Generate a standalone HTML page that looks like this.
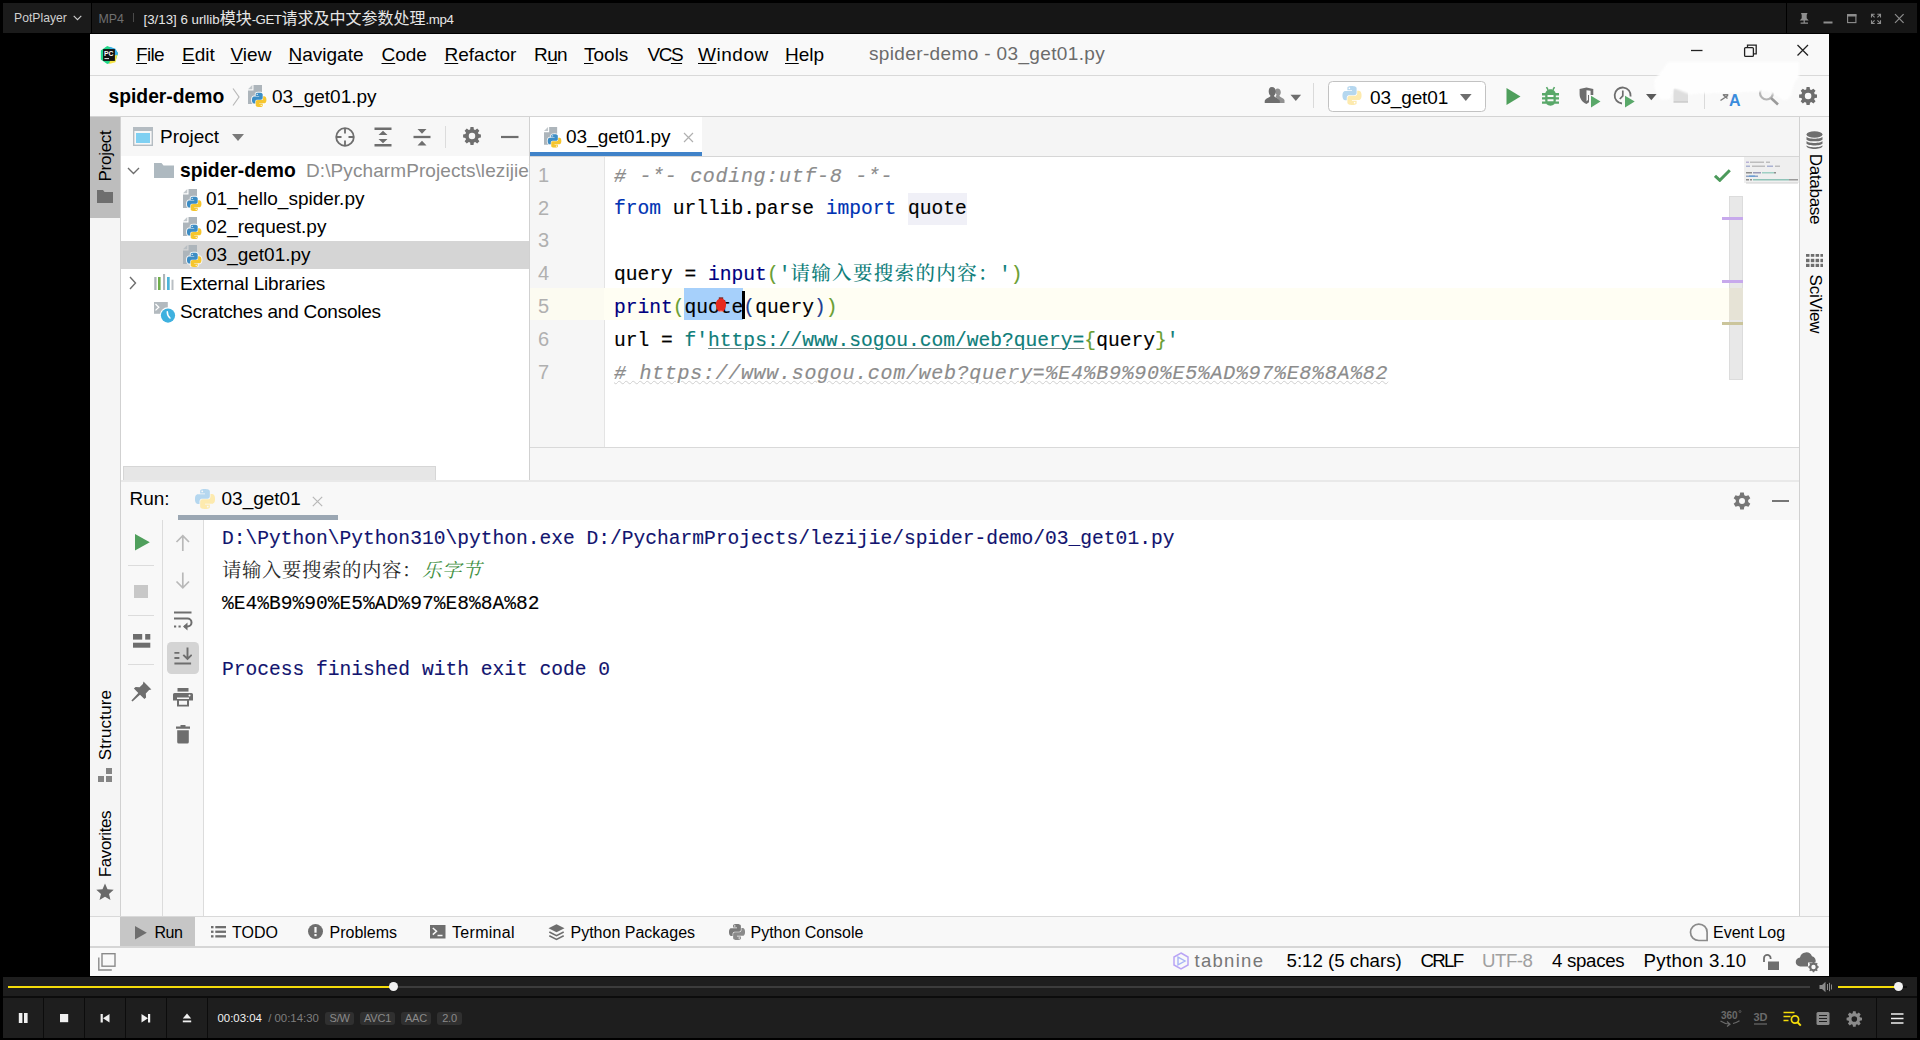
<!DOCTYPE html>
<html lang="zh">
<head>
<meta charset="utf-8">
<title>PotPlayer</title>
<style>
*{box-sizing:border-box;margin:0;padding:0}
html,body{width:1920px;height:1040px;overflow:hidden;background:#000}
body{position:relative;font-family:"Liberation Sans","Noto Sans CJK SC",sans-serif;font-size:19px;color:#000}
.a{position:absolute;white-space:nowrap}
.t{position:absolute;white-space:nowrap;line-height:24px;height:24px}
.mono{font-family:"Liberation Mono","Noto Serif CJK SC",monospace}
u{text-decoration-thickness:1.2px;text-underline-offset:1.5px}
/* potplayer */
#ptitle{left:3px;top:3px;width:1914px;height:30px;background:#161616}
#pctrl{left:3px;top:977px;width:1914px;height:61px;background:#1e1e1e}
/* video */
#vid{left:90px;top:34px;width:1739px;height:942px;background:#f7f7f7;overflow:hidden}
.ln{position:absolute;left:0;width:74px;padding-left:8px;margin-top:2.2px;color:#b0b0b0;font-size:20px;height:33px;line-height:33px}
.cl{-webkit-text-stroke:.15px;position:absolute;left:524px;height:33px;line-height:33px;font-size:19.6px;white-space:pre}
.kw{color:#0033b3}.bi{color:#000080}.st{color:#0f7e7a}.cm{color:#8c8c8c;font-style:italic;font-size:20px;letter-spacing:.69px}
.b1{color:#6a9e32}.b2{color:#1d3f94}.lk{text-decoration:underline;text-decoration-thickness:1px;text-underline-offset:2.2px;text-decoration-color:#6e8683}.wv{text-decoration:underline wavy #cfcfcf 1px;text-underline-offset:1.2px}
.cc{font-family:"Noto Serif CJK SC",serif;font-size:19.4px;letter-spacing:.6px;position:relative;top:.5px;line-height:0;-webkit-text-stroke:0}.ci{font-family:"Noto Serif CJK SC",serif;font-size:19.4px;letter-spacing:.6px;font-style:italic;color:#3f8f3f;position:relative;top:.5px;line-height:0;-webkit-text-stroke:0}
.bb{font-size:16px}.sb{font-size:18.700px}
.bd{position:absolute;top:35.300px;height:13px;line-height:13px;border-radius:3px;background:#303030;color:#8a8a8a;font-size:11px;text-align:center;letter-spacing:-.2px}
.cj{font-family:"Noto Serif CJK SC",serif;font-weight:500;font-size:19.5px;letter-spacing:1.35px;position:relative;top:0;line-height:0;-webkit-text-stroke:0}
.con{-webkit-text-stroke:.12px;position:absolute;left:132px;height:33px;line-height:33px;font-size:19.6px;white-space:pre;color:#000}
</style>
</head>
<body>
<!-- ===== PotPlayer title bar ===== -->
<div class="a" id="ptitle">
<div class="a" style="left:0;top:0;width:88px;height:30px;background:#1b1b1b"></div>
<div class="a" style="left:88px;top:0;width:1px;height:30px;background:#000"></div>
<div class="t" style="left:11px;top:3px;font-size:12.2px;color:#cfcfcf">PotPlayer</div>
<svg class="a" style="left:70px;top:12px" width="9" height="6" viewBox="0 0 9 6"><path d="M0.7 0.8L4.5 4.6L8.3 0.8" fill="none" stroke="#cfcfcf" stroke-width="1.1"/></svg>
<div class="t" style="left:95.5px;top:4px;font-size:12.4px;color:#6f6f6f">MP4</div>
<div class="a" style="left:130px;top:10px;width:1px;height:9px;background:#4a4a4a"></div>
<div class="t" style="left:140.5px;top:3.5px;font-size:13.3px;color:#e6e6e6"><span>[3/13] 6 urllib</span><span style="font-size:16px">模块</span><span style="letter-spacing:-.5px">-GET</span><span style="font-size:16px">请求及中文参数处理</span><span style="letter-spacing:-.4px">.mp4</span></div>
<div class="a" style="left:1783px;top:0;width:1px;height:30px;background:#000"></div>
<svg class="a" style="left:1783px;top:0" width="131" height="30" viewBox="0 0 131 30" fill="none" stroke="#8e8e8e">
<path d="M15 10h6.5l-0.8 2v3.2l2 2.3h-9l2-2.3V12z" fill="#8e8e8e" stroke="none"/><path d="M18.2 17v3M14.6 20.2h7.4" stroke-width="1.2"/>
<path d="M37.5 19.5h9" stroke-width="2"/>
<rect x="61.6" y="11.6" width="8.3" height="8" stroke-width="1.1"/><path d="M61 12.4h9.4" stroke-width="2.2"/>
<path d="M85.5 14.5v-3.2h3.2M94.500 14.5v-3.2h-3.2M85.5 17.300v3.2h3.2M94.5 17.300v3.2h-3.2M85.8 11.600l2.800 2.800M94.200 11.600l-2.800 2.800M85.800 20.200l2.800 -2.800M94.200 20.200l-2.800 -2.800" stroke-width="1.1"/>
<path d="M109 11.200l8.600 8.600M117.600 11.200l-8.600 8.600" stroke-width="1.2"/>
</svg>
</div>
<!-- ===== Video (PyCharm) ===== -->
<div class="a" id="vid">
<!-- symbols -->
<svg width="0" height="0" style="position:absolute">
<defs>
<symbol id="plogo" viewBox="0 0 24 24"><path d="M14.25.18l.9.2.73.26.59.3.45.32.34.34.25.34.16.33.1.3.04.26.02.2-.01.13V8.5l-.05.63-.13.55-.21.46-.26.38-.3.31-.33.25-.35.19-.35.14-.33.1-.3.07-.26.04-.21.02H8.77l-.69.05-.59.14-.5.22-.41.27-.33.32-.27.35-.2.36-.15.37-.1.35-.07.32-.04.27-.02.21v3.06H3.17l-.21-.03-.28-.07-.32-.12-.35-.18-.36-.26-.36-.36-.35-.46-.32-.59-.28-.73-.21-.88-.14-1.05-.05-1.23.06-1.22.16-1.04.24-.87.32-.71.36-.57.4-.44.42-.33.42-.24.4-.16.36-.1.32-.05.24-.01h.16l.06.01h8.16v-.83H6.18l-.01-2.75-.02-.37.05-.34.11-.31.17-.28.25-.26.31-.23.38-.2.44-.18.51-.15.58-.12.64-.1.71-.06.77-.04.84-.02 1.27.05zm-6.3 1.98l-.23.33-.08.41.08.41.23.34.33.22.41.09.41-.09.33-.22.23-.34.08-.41-.08-.41-.23-.33-.33-.22-.41-.09-.41.09z" fill="var(--pb,#3c8dc5)"/><path d="M21.04 6.11l.28.06.32.12.35.18.36.27.36.35.35.47.32.59.28.73.21.88.14 1.04.05 1.23-.06 1.23-.16 1.04-.24.86-.32.71-.36.57-.4.45-.42.33-.42.24-.4.16-.36.09-.32.05-.24.02-.16-.01h-8.22v.82h5.84l.01 2.76.02.36-.05.34-.11.31-.17.29-.25.25-.31.24-.38.2-.44.17-.51.15-.58.13-.64.09-.71.07-.77.04-.84.01-1.27-.04-1.07-.14-.9-.2-.73-.25-.59-.3-.45-.33-.34-.34-.25-.34-.16-.33-.1-.3-.04-.25-.02-.2.01-.13v-5.34l.05-.64.13-.54.21-.46.26-.38.3-.32.33-.24.35-.2.35-.14.33-.1.3-.06.26-.04.21-.02.13-.01h5.84l.69-.05.59-.14.5-.21.41-.28.33-.32.27-.35.2-.36.15-.36.1-.35.07-.32.04-.28.02-.21V6.07h2.09l.14.01zm-6.47 14.25l-.23.33-.08.41.08.41.23.33.33.23.41.08.41-.08.33-.23.23-.33.08-.41-.08-.41-.23-.33-.33-.23-.41-.08-.41.08z" fill="var(--py,#f6c62e)"/></symbol>
<symbol id="py" viewBox="0 0 20 22">
<path d="M5.500 0H14V19H0V5.500H5.500z" fill="#adb5bb"/>
<path d="M0 4.300L4.300 0V4.300z" fill="#adb5bb" opacity=".75"/>
<path transform="translate(4,7.700) scale(0.6)" d="M14.25.18l.9.2.73.26.59.3.45.32.34.34.25.34.16.33.1.3.04.26.02.2-.01.13V8.5l-.05.63-.13.55-.21.46-.26.38-.3.31-.33.25-.35.19-.35.14-.33.1-.3.07-.26.04-.21.02H8.77l-.69.05-.59.14-.5.22-.41.27-.33.32-.27.35-.2.36-.15.37-.1.35-.07.32-.04.27-.02.21v3.06H3.17l-.21-.03-.28-.07-.32-.12-.35-.18-.36-.26-.36-.36-.35-.46-.32-.59-.28-.73-.21-.88-.14-1.05-.05-1.23.06-1.22.16-1.04.24-.87.32-.71.36-.57.4-.44.42-.33.42-.24.4-.16.36-.1.32-.05.24-.01h.16l.06.01h8.16v-.83H6.18l-.01-2.75-.02-.37.05-.34.11-.31.17-.28.25-.26.31-.23.38-.2.44-.18.51-.15.58-.12.64-.1.71-.06.77-.04.84-.02 1.27.05zm-6.3 1.98l-.23.33-.08.41.08.41.23.34.33.22.41.09.41-.09.33-.22.23-.34.08-.41-.08-.41-.23-.33-.33-.22-.41-.09-.41.09zM21.04 6.11l.28.06.32.12.35.18.36.27.36.35.35.47.32.59.28.73.21.88.14 1.04.05 1.23-.06 1.23-.16 1.04-.24.86-.32.71-.36.57-.4.45-.42.33-.42.24-.4.16-.36.09-.32.05-.24.02-.16-.01h-8.22v.82h5.84l.01 2.76.02.36-.05.34-.11.31-.17.29-.25.25-.31.24-.38.2-.44.17-.51.15-.58.13-.64.09-.71.07-.77.04-.84.01-1.27-.04-1.07-.14-.9-.2-.73-.25-.59-.3-.45-.33-.34-.34-.25-.34-.16-.33-.1-.3-.04-.25-.02-.2.01-.13v-5.34l.05-.64.13-.54.21-.46.26-.38.3-.32.33-.24.35-.2.35-.14.33-.1.3-.06.26-.04.21-.02.13-.01h5.84l.69-.05.59-.14.5-.21.41-.28.33-.32.27-.35.2-.36.15-.36.1-.35.07-.32.04-.28.02-.21V6.07h2.09l.14.01zm-6.47 14.25l-.23.33-.08.41.08.41.23.33.33.23.41.08.41-.08.33-.23.23-.33.08-.41-.08-.41-.23-.33-.33-.23-.41-.08-.41.08z" fill="#fff" stroke="#fff" stroke-width="3.200" stroke-linejoin="round" opacity=".85"/>
<g transform="translate(4,7.700) scale(0.6)"><path d="M14.25.18l.9.2.73.26.59.3.45.32.34.34.25.34.16.33.1.3.04.26.02.2-.01.13V8.5l-.05.63-.13.55-.21.46-.26.38-.3.31-.33.25-.35.19-.35.14-.33.1-.3.07-.26.04-.21.02H8.77l-.69.05-.59.14-.5.22-.41.27-.33.32-.27.35-.2.36-.15.37-.1.35-.07.32-.04.27-.02.21v3.06H3.17l-.21-.03-.28-.07-.32-.12-.35-.18-.36-.26-.36-.36-.35-.46-.32-.59-.28-.73-.21-.88-.14-1.05-.05-1.23.06-1.22.16-1.04.24-.87.32-.71.36-.57.4-.44.42-.33.42-.24.4-.16.36-.1.32-.05.24-.01h.16l.06.01h8.16v-.83H6.18l-.01-2.75-.02-.37.05-.34.11-.31.17-.28.25-.26.31-.23.38-.2.44-.18.51-.15.58-.12.64-.1.71-.06.77-.04.84-.02 1.27.05zm-6.3 1.98l-.23.33-.08.41.08.41.23.34.33.22.41.09.41-.09.33-.22.23-.34.08-.41-.08-.41-.23-.33-.33-.22-.41-.09-.41.09z" fill="#3c8dc5"/><path d="M21.04 6.11l.28.06.32.12.35.18.36.27.36.35.35.47.32.59.28.73.21.88.14 1.04.05 1.23-.06 1.23-.16 1.04-.24.86-.32.71-.36.57-.4.45-.42.33-.42.24-.4.16-.36.09-.32.05-.24.02-.16-.01h-8.22v.82h5.84l.01 2.76.02.36-.05.34-.11.31-.17.29-.25.25-.31.24-.38.2-.44.17-.51.15-.58.13-.64.09-.71.07-.77.04-.84.01-1.27-.04-1.07-.14-.9-.2-.73-.25-.59-.3-.45-.33-.34-.34-.25-.34-.16-.33-.1-.3-.04-.25-.02-.2.01-.13v-5.34l.05-.64.13-.54.21-.46.26-.38.3-.32.33-.24.35-.2.35-.14.33-.1.3-.06.26-.04.21-.02.13-.01h5.84l.69-.05.59-.14.5-.21.41-.28.33-.32.27-.35.2-.36.15-.36.1-.35.07-.32.04-.28.02-.21V6.07h2.09l.14.01zm-6.47 14.25l-.23.33-.08.41.08.41.23.33.33.23.41.08.41-.08.33-.23.23-.33.08-.41-.08-.41-.23-.33-.33-.23-.41-.08-.41.08z" fill="#f6c62e"/></g>
</symbol>
<symbol id="gear" viewBox="0 0 20 20">
<path fill-rule="evenodd" d="M8.300 1h3.400l0.400 2.600 1.500 0.700 2.200-1.600 2.400 2.400-1.600 2.200 0.700 1.500 2.600 0.400v3.400l-2.600 0.400-0.700 1.500 1.600 2.200-2.400 2.400-2.200-1.600-1.500 0.700-0.400 2.600H8.300l-0.400-2.600-1.500-0.700-2.200 1.600-2.400-2.400 1.600-2.200-0.700-1.500L0.100 12.600V9.200l2.600-0.400 0.700-1.500L1.800 5.100l2.400-2.400 2.200 1.600 1.500-0.700zM10 7.300a3.600 3.600 0 1 0 0 7.200a3.600 3.600 0 0 0 0-7.200z" transform="translate(0,-0.900)"/>
</symbol>
</defs>
</svg>
<!-- menu bar -->
<div class="a" style="left:0;top:0;width:1739px;height:41px;background:#f9f9f9"></div>
<div class="a" style="left:0;top:41px;width:1739px;height:1px;background:#d9d9d9"></div>
<div class="a" style="left:0;top:42px;width:1739px;height:40px;background:#f9f9f9"></div>
<div class="a" style="left:0;top:82px;width:1739px;height:1px;background:#d4d4d4"></div>
<svg class="a" style="left:8.5px;top:11px" width="20" height="20" viewBox="0 0 22 22">
<path d="M2 6L9 1l8 3 4 5-3 9-9 3-7-5z" fill="#21d789"/><path d="M12 2l6 2 3 5-2 4-7-4z" fill="#3bb0e8"/><path d="M14 12l6-1-2 8-7 2z" fill="#f5e344"/>
<rect x="4.500" y="4.500" width="13" height="13" fill="#111"/><rect x="6" y="14.500" width="5" height="1" fill="#fff"/>
<text x="5.600" y="12" font-family="Liberation Sans,sans-serif" font-weight="700" font-size="7.500" fill="#fff">PC</text>
</svg>
<div class="t" style="left:46px;top:8.5px;letter-spacing:-.65px"><u>F</u>ile</div>
<div class="t" style="left:92px;top:8.5px"><u>E</u>dit</div>
<div class="t" style="left:140.500px;top:8.5px"><u>V</u>iew</div>
<div class="t" style="left:198.500px;top:8.5px"><u>N</u>avigate</div>
<div class="t" style="left:291.500px;top:8.5px"><u>C</u>ode</div>
<div class="t" style="left:354.500px;top:8.5px"><u>R</u>efactor</div>
<div class="t" style="left:444px;top:8.5px;letter-spacing:-.6px">R<u>u</u>n</div>
<div class="t" style="left:494px;top:8.5px"><u>T</u>ools</div>
<div class="t" style="left:557.5px;top:8.5px;letter-spacing:-1.5px">VC<u>S</u></div>
<div class="t" style="left:608px;top:8.5px;letter-spacing:.55px"><u>W</u>indow</div>
<div class="t" style="left:695px;top:8.5px"><u>H</u>elp</div>
<div class="t" style="left:779px;top:7.500px;color:#6b6b6b;letter-spacing:.36px">spider-demo - 03_get01.py</div>
<svg class="a" style="left:1595px;top:6px" width="130" height="20" viewBox="0 0 130 20" fill="none" stroke="#222" stroke-width="1.300">
<path d="M6 10.500h11.500"/><rect x="59.600" y="7.600" width="8.800" height="8.800" rx="1"/><path d="M62.500 7.500v-2.300h8.700v8.700h-2.600"/><path d="M112.500 5l10.500 10.500M123 5l-10.500 10.500"/>
</svg>
<!-- nav bar -->
<div class="t" style="left:18.500px;top:50.5px;font-weight:700;font-size:19.300px">spider-demo</div>
<svg class="a" style="left:141px;top:53px" width="10" height="20" viewBox="0 0 10 20"><path d="M2 1.500L8 10L2 18.500" fill="none" stroke="#b9b9b9" stroke-width="1.200"/></svg>
<svg class="a" style="left:158px;top:51px" width="20" height="22"><use href="#py"/></svg>
<div class="t" style="left:182px;top:50.5px">03_get01.py</div>


<!-- nav bar right -->
<svg class="a" style="left:1174px;top:52px" width="40" height="20" viewBox="0 0 40 20" fill="#6e6e6e">
<path d="M13.500 2.500c2 0 3.300 1.600 3.300 3.700 0 1.500-0.600 2.800-1.400 3.500 0.300 1.500 4.600 2.200 5.100 4.600V17h-5.500v-2.300c0-1.700-1.600-2.700-3.600-3.500 0.500-0.700 0.900-1.600 1.100-2.600-0.800-0.800-1.300-1.900-1.300-3C11.200 3.800 12 2.500 13.500 2.500z" opacity=".75"/>
<path d="M7.800 1c2.500 0 4 1.900 4 4.400 0 1.800-0.700 3.400-1.800 4.300 0.400 1.900 5.200 2.400 5.800 5.300v2H0.700v-2c0.600-2.900 5.400-3.400 5.800-5.300C5.400 8.800 4.700 7.200 4.700 5.400 4.700 2.900 5.600 1 7.800 1z"/>
<path d="M26.500 8.800h10.600L31.800 15z"/>
</svg>
<div class="a" style="left:1223px;top:49px;width:1px;height:25px;background:#dadada"></div>
<div class="a" style="left:1238px;top:46.500px;width:158px;height:31.500px;background:#fff;border:1px solid #c2c2c2;border-radius:4.500px"></div>
<svg class="a" style="left:1252px;top:52.400px;--pb:#b5d7ef;--py:#fdeaae" width="20" height="19"><use href="#plogo"/></svg>
<div class="t" style="left:1280px;top:51.500px;letter-spacing:-.15px">03_get01</div>
<svg class="a" style="left:1370px;top:59.500px" width="12" height="7" viewBox="0 0 12 7"><path d="M0 0h11.600L5.800 7z" fill="#6e6e6e"/></svg>
<svg class="a" style="left:1415.500px;top:53.500px" width="15" height="17" viewBox="0 0 15 17"><path d="M0.500 0L14.500 8.500L0.500 17z" fill="#4f9f5c"/></svg>
<svg class="a" style="left:1451px;top:51.500px" width="19" height="20" viewBox="0 0 19 20" fill="#59a869">
<path d="M5.500 1.200l1.600 2.600M13.500 1.200l-1.600 2.600" stroke="#59a869" stroke-width="1.600" fill="none"/>
<path fill-rule="evenodd" d="M9.500 3.300c3 0 5.300 2.300 5.300 5v6.200c0 2.900-2.300 5.200-5.300 5.200s-5.300-2.300-5.300-5.200V8.300c0-2.700 2.300-5 5.300-5zM6.500 9v1.900h6V9zM6.500 13.300v1.900h6v-1.900z"/>
<path d="M1 7h4v2.400h-4zM14 7h4v2.400h-4zM1 11.200h4v2.400h-4zM14 11.200h4v2.400h-4zM1 15.400h4v2.400h-4zM14 15.400h4v2.400h-4z"/>
</svg>
<svg class="a" style="left:1489px;top:53px" width="23" height="21" viewBox="0 0 23 21">
<path d="M0.600 2L7.500 0.500l6.800 1.500v6H10v7.200L7.500 17C3 15 0.600 11.500 0.600 7z" fill="#6e6e6e"/><path d="M7.500 3.200v11L9 13V8h2.600V3.800z" fill="#f9f9f9"/>
<path d="M12 8.800L21.500 14.500L12 20.500z" fill="#59a869"/>
</svg>
<svg class="a" style="left:1523px;top:52px" width="45" height="22" viewBox="0 0 45 22">
<path d="M17.600 10.500A8 8 0 1 0 9 17.500" fill="none" stroke="#6e6e6e" stroke-width="1.800"/><path d="M9.800 4.500v5.300l-3 3.200" fill="none" stroke="#6e6e6e" stroke-width="1.700"/>
<path d="M12 9.800L21.700 15.500L12 21.500z" fill="#59a869"/>
<path d="M33 8h10.600L38.300 14.300z" fill="#5a5a5a"/>
</svg>
<svg class="a" style="left:1583px;top:54px" width="16" height="16" viewBox="0 0 16 16"><rect x="0.500" y="0.500" width="14.500" height="12.500" fill="#dedede"/><rect x="0.500" y="13" width="14.500" height="1.800" fill="#cfcfcf"/></svg>
<div class="a" style="left:1614px;top:52px;width:1px;height:23px;background:#dadada"></div>
<svg class="a" style="left:1629px;top:52px" width="24" height="22" viewBox="0 0 24 22">
<path d="M1.500 14.500L9 9.500M4.500 9.300l4 3.200M3.800 8.800h5.500" stroke="#7a7a7a" stroke-width="1.400" fill="none"/>
<text x="10" y="20.300" font-family="Liberation Sans,sans-serif" font-size="16" font-weight="700" fill="#3a8bdc">A</text>
</svg>
<svg class="a" style="left:1668px;top:54px" width="22" height="18" viewBox="0 0 22 18"><circle cx="8.500" cy="5" r="6.500" fill="none" stroke="#b4b4b4" stroke-width="2.200"/><path d="M13 10l7 6.500" stroke="#9a9a9a" stroke-width="2.600"/></svg>
<svg class="a" style="left:1708.800px;top:53px;fill:#6e6e6e" width="18.200" height="18.200"><use href="#gear"/></svg>
<svg class="a" style="left:1550px;top:20px;filter:blur(1.1px)" width="165" height="60" viewBox="1640 54 165 60"><path d="M1668 62H1799V76L1794 84 1791 96 1785 101 1779 97 1768 91.500 1750 92 1722 93 1700 93.500 1690 94.500 1674 88 1670 99 1661 100 1655 90 1654 80 1661 72z" fill="#fefefe"/></svg>
<!-- left tool strip -->
<div class="a" style="left:0;top:83px;width:30px;height:800px;background:#f5f5f5"></div>
<div class="a" style="left:30px;top:83px;width:1px;height:800px;background:#d1d1d1"></div>
<div class="a" style="left:0;top:83px;width:30px;height:101px;background:#bdbdbd"></div>
<div class="a" style="left:15.700px;top:121.500px;width:0;height:0"><div class="t" style="left:-40px;top:-12px;width:80px;text-align:center;transform:rotate(-90deg);transform-origin:40px 12px;font-size:17px;letter-spacing:-.27px">Project</div></div>
<svg class="a" style="left:7px;top:156px" width="16" height="13" viewBox="0 0 16 13"><path d="M0 0h6l1.500 2H16v11H0z" fill="#6e6e6e"/></svg>
<div class="a" style="left:16px;top:691px;width:0;height:0"><div class="t" style="left:-50px;top:-12px;width:100px;text-align:center;transform:rotate(-90deg);transform-origin:50px 12px;font-size:17px;letter-spacing:.17px">Structure</div></div>
<svg class="a" style="left:8px;top:734px" width="14" height="14" viewBox="0 0 14 14" fill="#858585"><rect x="8" y="0" width="6" height="6"/><rect x="0" y="8" width="6" height="6"/><rect x="8" y="8" width="6" height="6"/></svg>
<div class="a" style="left:16px;top:810px;width:0;height:0"><div class="t" style="left:-50px;top:-12px;width:100px;text-align:center;transform:rotate(-90deg);transform-origin:50px 12px;font-size:17px;letter-spacing:-.38px">Favorites</div></div>
<svg class="a" style="left:6px;top:849px" width="18" height="18" viewBox="0 0 18 18"><path d="M9 0.500l2.500 5.800 6.200 0.500-4.700 4.100 1.500 6.200L9 13.800 3.500 17.100 5 10.900 0.300 6.800l6.200-0.500z" fill="#6a6a6a"/></svg>
<!-- project panel -->
<div class="a" style="left:31px;top:83px;width:408px;height:39px;background:#f7f7f7"></div>
<div class="a" style="left:31px;top:122px;width:408px;height:325px;background:#fff"></div>
<div class="a" style="left:439px;top:83px;width:1px;height:364px;background:#d1d1d1"></div>
<svg class="a" style="left:43px;top:93px" width="20" height="19" viewBox="0 0 20 19"><rect x="0.700" y="0.700" width="18.600" height="17.600" fill="none" stroke="#b4bcc2" stroke-width="1.400"/><rect x="0" y="0" width="20" height="4" fill="#b4bcc2"/><rect x="3" y="6" width="14" height="10" fill="#7fd0f2"/></svg>
<div class="t" style="left:70px;top:90.500px">Project</div>
<svg class="a" style="left:142px;top:99.500px" width="12" height="7" viewBox="0 0 12 7"><path d="M0 0h12L6 7z" fill="#7a7a7a"/></svg>
<svg class="a" style="left:244px;top:92px" width="186" height="22" viewBox="0 0 186 22" fill="none" stroke="#6e6e6e">
<circle cx="11" cy="11" r="8.800" stroke-width="1.800"/><path d="M11 2v5.500M11 14.500V20M2 11h5.500M14.500 11H20" stroke-width="1.800"/>
<path d="M40.500 2.700h17M40.500 19.300h17" stroke-width="2.400"/><path d="M44.500 9L49 4.800 53.500 9zM44.500 13L49 17.200 53.500 13z" fill="#6e6e6e" stroke="none"/>
<path d="M79.500 11h17" stroke-width="2.300"/><path d="M83.500 3L88 7.700 92.500 3zM83.500 19.500L88 14.800 92.500 19.500z" fill="#6e6e6e" stroke="none"/>
<path d="M111.500 -3v27" stroke="#dcdcdc" stroke-width="1"/>
<path d="M167 11h17.500" stroke-width="2.200"/>
</svg>
<svg class="a" style="left:372.800px;top:93.400px;fill:#6e6e6e" width="18" height="18"><use href="#gear"/></svg>
<!-- tree -->
<div class="a" style="left:31px;top:207px;width:408px;height:28px;background:#d5d5d5"></div>
<svg class="a" style="left:37px;top:133px" width="13" height="8" viewBox="0 0 13 8"><path d="M1 1l5.500 5.500L12 1" fill="none" stroke="#6e6e6e" stroke-width="1.400"/></svg>
<svg class="a" style="left:63.500px;top:128.500px" width="20" height="15" viewBox="0 0 20 15"><path d="M0 0h7.500l2 2.500H20V15H0z" fill="#aeb9c0"/></svg>
<div class="t" style="left:90px;top:124.500px;font-weight:700;font-size:19.300px">spider-demo</div>
<div class="a" style="left:216px;top:124.500px;width:222.500px;height:24px;overflow:hidden"><div class="t" style="left:0;top:0;color:#8c8c8c;font-size:19px;letter-spacing:.09px">D:\PycharmProjects\lezijie\spider-demo</div></div>
<svg class="a" style="left:93px;top:154.700px" width="20" height="22"><use href="#py"/></svg>
<div class="t" style="left:116px;top:153px">01_hello_spider.py</div>
<svg class="a" style="left:93px;top:182.700px" width="20" height="22"><use href="#py"/></svg>
<div class="t" style="left:116px;top:181px">02_request.py</div>
<svg class="a" style="left:93px;top:210.700px" width="20" height="22"><use href="#py"/></svg>
<div class="t" style="left:116px;top:209px">03_get01.py</div>
<svg class="a" style="left:39px;top:242px" width="8" height="14" viewBox="0 0 8 14"><path d="M1 1l5.500 6L1 13" fill="none" stroke="#6e6e6e" stroke-width="1.400"/></svg>
<svg class="a" style="left:64px;top:240px" width="20" height="16" viewBox="0 0 20 16"><rect x="0.250" y="3" width="2.300" height="13" fill="#aeb5ba"/><rect x="4" y="3" width="2.600" height="13" fill="#6fae4b"/><rect x="9" y="0" width="2.100" height="16" fill="#aeb5ba"/><rect x="13" y="3" width="2.700" height="13" fill="#4db4d9"/><rect x="17.500" y="5.700" width="2" height="10.300" fill="#b9bfc4"/></svg>
<div class="t" style="left:90px;top:237.500px;letter-spacing:-.15px">External Libraries</div>
<svg class="a" style="left:64px;top:268px" width="22" height="22" viewBox="0 0 22 22"><path d="M0 0h13.800v11.800H0z" fill="#b3babf"/><path d="M1.500 2l3.300 3.200-3.300 3.200" stroke="#fff" fill="none" stroke-width="1.300"/><circle cx="14" cy="13.600" r="8.300" fill="#fff"/><circle cx="14" cy="13.600" r="7.100" fill="#3fb1df"/><path d="M13.300 9.800c0 3.500 0.800 4.800 2.700 6.200" stroke="#fff" stroke-width="1.500" fill="none" stroke-linecap="round"/></svg>
<div class="t" style="left:90px;top:265.500px;letter-spacing:-.23px">Scratches and Consoles</div>
<!-- project h-scrollbar -->
<div class="a" style="left:33px;top:432px;width:313px;height:15px;background:#e6e6e6;border:1px solid #d6d6d6;border-bottom:none"></div>

<!-- editor tab bar -->
<div class="a" style="left:440px;top:83px;width:1269px;height:39px;background:#f5f5f5"></div>
<div class="a" style="left:440px;top:122px;width:1269px;height:1px;background:#d6d6d6"></div>
<div class="a" style="left:440px;top:83px;width:172px;height:39px;background:#fff"></div>
<div class="a" style="left:440px;top:118px;width:172px;height:4px;background:#4083c9"></div>
<svg class="a" style="left:453.700px;top:93.300px" width="18.800" height="20.700"><use href="#py"/></svg>
<div class="t" style="left:476px;top:91px">03_get01.py</div>
<svg class="a" style="left:592.5px;top:97.500px" width="11" height="11" viewBox="0 0 11 11"><path d="M1 1l9 9M10 1l-9 9" stroke="#b0b0b0" stroke-width="1.200" fill="none"/></svg>
<!-- editor body -->
<div class="a" style="left:440px;top:123px;width:1269px;height:290px;background:#fff"></div>
<div class="a" style="left:440px;top:123px;width:73.500px;height:290px;background:#f6f6f6"></div>
<div class="a" style="left:513.500px;top:123px;width:1px;height:290px;background:#e4e4e4"></div>
<div class="a" style="left:440px;top:254px;width:74px;height:32px;background:#fcfbf1"></div>
<div class="a" style="left:514px;top:254px;width:1139px;height:32px;background:#fffef3"></div>
<div class="a" style="left:440px;top:413px;width:1269px;height:1px;background:#d9d9d9"></div>
<div class="a" style="left:440px;top:414px;width:1269px;height:33px;background:#f7f7f7"></div>
<div class="a" style="left:440px;top:0;width:80px;height:0;font-family:'Liberation Sans',sans-serif">
<div class="ln" style="top:122.60px">1</div><div class="ln" style="top:155.45px">2</div><div class="ln" style="top:188.30px">3</div><div class="ln" style="top:221.15px">4</div><div class="ln" style="top:254.00px">5</div><div class="ln" style="top:286.85px">6</div><div class="ln" style="top:319.70px">7</div>
</div>
<div class="a" style="left:594px;top:254px;width:58.700px;height:32px;background:#a6d0fb"></div>
<div class="a" style="left:652.200px;top:257px;width:2.600px;height:28px;background:#000"></div>
<div class="cl mono" style="top:126.30px"><span class="cm"># -*- coding:utf-8 -*-</span></div>
<div class="cl mono" style="top:159.15px"><span class="kw">from</span> urllib.parse <span class="kw">import</span> <span style="background:#f0f0f7;box-shadow:0 -5px 0 #f0f0f7,0 5px 0 #f0f0f7">quote</span></div>
<div class="cl mono" style="top:224.85px">query = <span class="bi">input</span><span class="b1">(</span><span class="st">&#39;<span class="cj">请输入要搜索的内容：</span>&#39;</span><span class="b1">)</span></div>
<div class="cl mono" style="top:257.70px"><span class="bi">print</span><span class="b1">(</span>quote<span class="b2">(</span>query<span class="b2">)</span><span class="b1">)</span></div>
<div class="cl mono" style="top:290.55px">url = <span class="st">f&#39;<span class="lk">https://www.sogou.com/web?query=</span></span><span class="b1">{</span>query<span class="b1">}</span><span class="st">&#39;</span></div>
<div class="cl mono" style="top:323.40px"><span class="cm wv"># https://www.sogou.com/web?query=%E4%B9%90%E5%AD%97%E8%8A%82</span></div>
<svg class="a" style="left:624px;top:261px" width="14" height="18" viewBox="0 0 14 18"><path d="M4.800 2.300h4.400v3h-4.400z" fill="#7a2f2a"/><path d="M7 3.500c2.800 0 5.100 2.200 5.100 5.800 0 2.600-1.200 5.600-2.300 6.600-0.700 0.700-1.600 0.500-2.800 0.500s-2.100 0.200-2.800-0.500C3.100 14.900 1.900 11.900 1.900 9.300 1.900 5.700 4.200 3.500 7 3.500z" fill="#e6291f"/><path d="M5.500 16.200h3" stroke="#f2b4a8" stroke-width="1"/></svg>
<!-- editor right: check, minimap, scrollbar -->
<svg class="a" style="left:1624px;top:134.500px" width="17" height="13" viewBox="0 0 17 13"><path d="M1 6.800l4.800 4.500L15.800 1.300" stroke="#4c9a5b" stroke-width="3" fill="none"/></svg>
<div class="a" style="left:1653.500px;top:123px;width:55.500px;height:26px;background:#efefef"></div>
<svg class="a" style="left:1653.500px;top:123px" width="56" height="30" viewBox="0 0 56 30">
<rect x="2" y="4.500" width="3" height="1.500" fill="#b9b3d6"/><rect x="6" y="4.500" width="14" height="1.500" fill="#bdbdbd"/><rect x="22" y="4.500" width="4" height="1.500" fill="#bdbdbd"/>
<rect x="2" y="8.500" width="4" height="1.500" fill="#aab2d2"/><rect x="8" y="8.500" width="13" height="1.500" fill="#bdbdbd"/><rect x="23" y="8.500" width="6" height="1.500" fill="#aab2d2"/><rect x="31" y="8.500" width="5" height="1.500" fill="#bdbdbd"/>
<rect x="2" y="15" width="6" height="1.500" fill="#8e8e8e"/><rect x="9" y="15" width="8" height="1.500" fill="#9a9ab8"/><rect x="18" y="15" width="12" height="1.500" fill="#9fd0c4"/><rect x="30" y="15" width="2" height="1.500" fill="#8e8e8e"/>
<rect x="2" y="18.500" width="12" height="1.500" fill="#8ea2c4"/><rect x="5" y="18.500" width="6" height="1.500" fill="#6b9fd6"/>
<rect x="2" y="22" width="3" height="1.500" fill="#8e8e8e"/><rect x="6" y="22" width="2" height="1.500" fill="#8e8e8e"/><rect x="9" y="22" width="36" height="1.500" fill="#8fc3b8"/><rect x="45" y="22" width="9" height="1.500" fill="#9a9a9a"/>
<rect x="2" y="25.500" width="52" height="1" fill="#d0d0d0"/>
</svg>
<div class="a" style="left:1638.500px;top:162px;width:14px;height:184px;background:#e8e8e8;border:1px solid #dcdcdc"></div>
<div class="a" style="left:1638.500px;top:254px;width:14px;height:32px;background:#e6e3d6"></div>
<div class="a" style="left:1632px;top:183px;width:20.500px;height:2.500px;background:#c7a9ec"></div>
<div class="a" style="left:1632px;top:246px;width:20.500px;height:2.500px;background:#c7a9ec"></div>
<div class="a" style="left:1632px;top:288px;width:20.500px;height:2.500px;background:#cbc59c"></div>
<!-- right tool strip -->
<div class="a" style="left:1709px;top:83px;width:30px;height:800px;background:#f7f7f7"></div>
<div class="a" style="left:1709px;top:83px;width:1px;height:800px;background:#d1d1d1"></div>
<svg class="a" style="left:1716px;top:97px" width="17" height="18" viewBox="0 0 17 18" fill="#6e6e6e"><ellipse cx="8.500" cy="3.500" rx="8" ry="3.200"/><path d="M0.500 5.800c1.500 2.600 14.500 2.600 16 0v2.600c-1.500 2.600-14.500 2.600-16 0zM0.500 10c1.500 2.600 14.500 2.600 16 0v2.600c-1.500 2.600-14.500 2.600-16 0zM0.500 14.200c1.500 2.600 14.500 2.600 16 0v1c-1.500 3.600-14.500 3.600-16 0z"/></svg>
<div class="a" style="left:1724.500px;top:155px;width:0;height:0"><div class="t" style="left:-50px;top:-12px;width:100px;text-align:center;transform:rotate(90deg);transform-origin:50px 12px;font-size:17px;letter-spacing:-.3px">Database</div></div>
<svg class="a" style="left:1716px;top:220px" width="17" height="13" viewBox="0 0 17 13" fill="#6e6e6e"><rect x="0" y="0" width="3.500" height="2.800"/><rect x="4.800" y="0" width="3.500" height="2.800"/><rect x="9.600" y="0" width="3.500" height="2.800"/><rect x="14.400" y="0" width="2.600" height="2.800"/><rect x="0" y="4.800" width="3.500" height="3.400"/><rect x="4.800" y="4.800" width="3.500" height="3.400"/><rect x="9.600" y="4.800" width="3.500" height="3.400"/><rect x="14.400" y="4.800" width="2.600" height="3.400"/><rect x="0" y="9.800" width="3.500" height="3.200"/><rect x="4.800" y="9.800" width="3.500" height="3.200"/><rect x="9.600" y="9.800" width="3.500" height="3.200"/><rect x="14.400" y="9.800" width="2.600" height="3.200"/></svg>
<div class="a" style="left:1724.500px;top:269.500px;width:0;height:0"><div class="t" style="left:-50px;top:-12px;width:100px;text-align:center;transform:rotate(90deg);transform-origin:50px 12px;font-size:17px;letter-spacing:-.2px">SciView</div></div>

<!-- run panel -->
<div class="a" style="left:31px;top:446px;width:1678px;height:2px;background:#e9e9e9"></div>
<div class="a" style="left:31px;top:448px;width:1678px;height:38px;background:#f8f8f8"></div>
<div class="t" style="left:39.500px;top:453.200px">Run:</div>
<svg class="a" style="left:105px;top:454.500px;--pb:#b5d7ef;--py:#fdeaae" width="20" height="20"><use href="#plogo"/></svg>
<div class="t" style="left:131.500px;top:453.200px">03_get01</div>
<svg class="a" style="left:221.500px;top:461.500px" width="11" height="11" viewBox="0 0 11 11"><path d="M0.800 0.800l9.400 9.400M10.200 0.800l-9.400 9.400" stroke="#b8b8b8" stroke-width="1.200" fill="none"/></svg>
<div class="a" style="left:87.500px;top:481px;width:160.500px;height:4.500px;background:#9ba7b3"></div>
<svg class="a" style="left:1642.500px;top:457.500px;fill:#767676" width="18" height="19" viewBox="0 0 18 19"><path fill-rule="evenodd" d="M7.200 0.500h3.600l0.500 2.700 1.600 0.900 2.600-0.900 1.800 3.100-2.100 1.800v1.800l2.100 1.800-1.800 3.100-2.600-0.900-1.600 0.900-0.500 2.700H7.200l-0.500-2.700-1.600-0.900-2.600 0.900-1.800-3.100 2.100-1.800V8.100L0.700 6.300l1.800-3.100 2.600 0.900 1.600-0.900zM9 6a3 3 0 1 0 0 6a3 3 0 0 0 0-6z"/></svg>
<div class="a" style="left:1682px;top:465.500px;width:17px;height:2.600px;background:#767676"></div>
<!-- run toolbars -->
<div class="a" style="left:31px;top:486px;width:41px;height:397px;background:#f8f8f8"></div>
<div class="a" style="left:72px;top:486px;width:1px;height:397px;background:#dcdcdc"></div>
<div class="a" style="left:73px;top:486px;width:40px;height:397px;background:#f8f8f8"></div>
<div class="a" style="left:113px;top:486px;width:1px;height:397px;background:#dcdcdc"></div>
<div class="a" style="left:114px;top:486px;width:1595px;height:397px;background:#fff"></div>
<svg class="a" style="left:45px;top:499.500px" width="15" height="17" viewBox="0 0 15 17"><path d="M0 0L14.800 8.300L0 16.600z" fill="#4f9f5c"/></svg>
<div class="a" style="left:37.500px;top:531px;width:26px;height:1px;background:#dcdcdc"></div>
<div class="a" style="left:44.400px;top:550.800px;width:13.600px;height:13.300px;background:#c8c8c8"></div>
<div class="a" style="left:37.500px;top:580.500px;width:26px;height:1px;background:#dcdcdc"></div>
<svg class="a" style="left:42.700px;top:600.400px" width="18" height="14" viewBox="0 0 18 14" fill="#6e6e6e"><rect x="0" y="0" width="9.200" height="5.600"/><rect x="12.200" y="0" width="5.100" height="5.600"/><rect x="0" y="8.700" width="17.300" height="5"/></svg>
<div class="a" style="left:37.500px;top:630px;width:26px;height:1px;background:#dcdcdc"></div>
<svg class="a" style="left:40.500px;top:646.500px" width="21" height="21" viewBox="0 0 21 21"><path d="M12.500 0.600l7.900 7.900-2.300 0.600-3.300 3.300 0.300 4-1.700 1.700-4.400-4.400L1.500 20.600 0.400 19.500 7.300 12 2.900 7.600l1.700-1.700 4 0.300 3.300-3.300z" fill="#6e6e6e"/></svg>
<svg class="a" style="left:85px;top:500px" width="16" height="18" viewBox="0 0 16 18" fill="none" stroke="#b9b9b9" stroke-width="1.700"><path d="M7.800 17V2M1.500 8l6.300-6.300L14 8"/></svg>
<svg class="a" style="left:85px;top:538px" width="16" height="18" viewBox="0 0 16 18" fill="none" stroke="#b9b9b9" stroke-width="1.700"><path d="M7.800 0.500v15M1.500 9.500l6.300 6.300L14 9.500"/></svg>
<svg class="a" style="left:84px;top:576.500px" width="19" height="20" viewBox="0 0 19 20" fill="none" stroke="#6e6e6e" stroke-width="2"><path d="M0 1.500h17.500M0 7.500h13.500a4 4 0 0 1 0 8H10"/><path d="M0 15.500h2.200M4.500 15.500h2.200" /><path d="M13.500 11.500l-4.500 4 4.500 4z" fill="#6e6e6e" stroke="none"/></svg>
<div class="a" style="left:77.200px;top:608px;width:31.500px;height:31.500px;background:#d4d4d4;border-radius:4.500px"></div>
<svg class="a" style="left:84px;top:613px" width="18" height="19" viewBox="0 0 18 19" fill="none" stroke="#6e6e6e" stroke-width="1.900"><path d="M0.400 5.900h5M0.400 11h5M0.400 16.500h16.700M13.500 0.500v11M9.300 7.800l4.200 4.200 4.200-4.200"/></svg>
<svg class="a" style="left:83px;top:654px" width="20" height="19" viewBox="0 0 20 19" fill="#6e6e6e"><rect x="4.500" y="0" width="11" height="3.600"/><path fill-rule="evenodd" d="M1.500 5h17a1.500 1.500 0 0 1 1.500 1.500V12.500H16V9.500H4v3H0V6.500A1.500 1.500 0 0 1 1.500 5zM16.500 6.500a1 1 0 1 0 0 2a1 1 0 0 0 0-2z"/><path fill-rule="evenodd" d="M4 11h12v7.500H4zM6 12.800v3.900h8v-3.900z"/></svg>
<svg class="a" style="left:86px;top:690.500px" width="14" height="19" viewBox="0 0 14 19" fill="#6e6e6e"><path d="M4.500 0h5v1.500H14v2.300H0V1.500h4.500z"/><path d="M1.200 5.300h11.600v11.700a1.500 1.500 0 0 1-1.500 1.500H2.700a1.500 1.500 0 0 1-1.500-1.500z"/></svg>
<!-- console text -->
<div class="con mono" style="top:488.80px;color:#12146f">D:\Python\Python310\python.exe D:/PycharmProjects/lezijie/spider-demo/03_get01.py</div>
<div class="con mono" style="top:521.60px;color:#2b2b2b"><span class="cc">请输入要搜索的内容：</span><span class="ci">乐字节</span></div>
<div class="con mono" style="top:554.40px">%E4%B9%90%E5%AD%97%E8%8A%82</div>
<div class="con mono" style="top:620.00px;color:#12146f">Process finished with exit code 0</div>

<!-- bottom tool window bar -->
<div class="a" style="left:0;top:882px;width:1739px;height:1px;background:#d9d9d9"></div>
<div class="a" style="left:0;top:883px;width:1739px;height:29px;background:#f8f8f8"></div>
<div class="a" style="left:0;top:912px;width:1739px;height:1.500px;background:#d6d6d6"></div>
<div class="a" style="left:0;top:913.500px;width:1739px;height:29px;background:#f9f9f9"></div>
<div class="a" style="left:29.500px;top:883px;width:75.500px;height:28.500px;background:#c6c6c6"></div>
<svg class="a" style="left:44.500px;top:891.500px" width="12" height="14" viewBox="0 0 12 14"><path d="M0 0L11.800 6.700L0 13.400z" fill="#6e6e6e"/></svg>
<div class="t bb" style="left:64.500px;top:887px;letter-spacing:-.5px">Run</div>
<svg class="a" style="left:121px;top:892px" width="15" height="12" viewBox="0 0 15 12" fill="#6e6e6e"><rect x="0" y="0" width="2.500" height="2.300"/><rect x="4.300" y="0" width="10.700" height="2.300"/><rect x="0" y="4.600" width="2.500" height="2.300"/><rect x="4.300" y="4.600" width="10.700" height="2.300"/><rect x="0" y="9.200" width="2.500" height="2.300"/><rect x="4.300" y="9.200" width="10.700" height="2.300"/></svg>
<div class="t bb" style="left:142px;top:887px">TODO</div>
<svg class="a" style="left:218px;top:889.500px" width="15" height="15" viewBox="0 0 15 15"><circle cx="7.500" cy="7.500" r="7.500" fill="#6e6e6e"/><rect x="6.400" y="3" width="2.200" height="5.700" fill="#f8f8f8"/><rect x="6.400" y="10" width="2.200" height="2.200" fill="#f8f8f8"/></svg>
<div class="t bb" style="left:239.500px;top:887px">Problems</div>
<svg class="a" style="left:339.500px;top:890.500px" width="16" height="14" viewBox="0 0 16 14"><rect x="0" y="0" width="15.500" height="13.500" fill="#6e6e6e"/><path d="M2.800 3l3.700 3.300-3.700 3.300" stroke="#f8f8f8" stroke-width="1.500" fill="none"/><path d="M7.500 10.500h5" stroke="#f8f8f8" stroke-width="1.500"/></svg>
<div class="t bb" style="left:362px;top:887px;letter-spacing:.3px">Terminal</div>
<svg class="a" style="left:458px;top:889.500px" width="17" height="17" viewBox="0 0 17 17"><path d="M8.500 0.300L16.500 4.300L8.500 8.300L0.500 4.300z" fill="#6e6e6e"/><path d="M1.300 8l7.200 3.600L15.700 8M1.300 11.800l7.200 3.600 7.200-3.600" stroke="#6e6e6e" stroke-width="1.600" fill="none"/></svg>
<div class="t bb" style="left:480.500px;top:887px">Python Packages</div>
<svg class="a" style="left:638.500px;top:890.300px" width="16" height="16" viewBox="0 0 24 24"><path d="M14.25.18l.9.2.73.26.59.3.45.32.34.34.25.34.16.33.1.3.04.26.02.2-.01.13V8.5l-.05.63-.13.55-.21.46-.26.38-.3.31-.33.25-.35.19-.35.14-.33.1-.3.07-.26.04-.21.02H8.77l-.69.05-.59.14-.5.22-.41.27-.33.32-.27.35-.2.36-.15.37-.1.35-.07.32-.04.27-.02.21v3.06H3.17l-.21-.03-.28-.07-.32-.12-.35-.18-.36-.26-.36-.36-.35-.46-.32-.59-.28-.73-.21-.88-.14-1.05-.05-1.23.06-1.22.16-1.04.24-.87.32-.71.36-.57.4-.44.42-.33.42-.24.4-.16.36-.1.32-.05.24-.01h.16l.06.01h8.16v-.83H6.18l-.01-2.75-.02-.37.05-.34.11-.31.17-.28.25-.26.31-.23.38-.2.44-.18.51-.15.58-.12.64-.1.71-.06.77-.04.84-.02 1.27.05zm-6.3 1.98l-.23.33-.08.41.08.41.23.34.33.22.41.09.41-.09.33-.22.23-.34.08-.41-.08-.41-.23-.33-.33-.22-.41-.09-.41.09z" fill="#7a7a7a"/><path d="M21.04 6.11l.28.06.32.12.35.18.36.27.36.35.35.47.32.59.28.73.21.88.14 1.04.05 1.23-.06 1.23-.16 1.04-.24.86-.32.71-.36.57-.4.45-.42.33-.42.24-.4.16-.36.09-.32.05-.24.02-.16-.01h-8.22v.82h5.84l.01 2.76.02.36-.05.34-.11.31-.17.29-.25.25-.31.24-.38.2-.44.17-.51.15-.58.13-.64.09-.71.07-.77.04-.84.01-1.27-.04-1.07-.14-.9-.2-.73-.25-.59-.3-.45-.33-.34-.34-.25-.34-.16-.33-.1-.3-.04-.25-.02-.2.01-.13v-5.34l.05-.64.13-.54.21-.46.26-.38.3-.32.33-.24.35-.2.35-.14.33-.1.3-.06.26-.04.21-.02.13-.01h5.84l.69-.05.59-.14.5-.21.41-.28.33-.32.27-.35.2-.36.15-.36.1-.35.07-.32.04-.28.02-.21V6.07h2.09l.14.01zm-6.47 14.25l-.23.33-.08.41.08.41.23.33.33.23.41.08.41-.08.33-.23.23-.33.08-.41-.08-.41-.23-.33-.33-.23-.41-.08-.41.08z" fill="#8a8a8a"/></svg>
<div class="t bb" style="left:660.500px;top:887px">Python Console</div>
<svg class="a" style="left:1599px;top:889px" width="20" height="19" viewBox="0 0 20 19"><path d="M9.800 1.200c4.700 0 8.300 3.400 8.300 8v8.300H9.800c-4.700 0-8.300-3.500-8.300-8.200 0-4.600 3.600-8.100 8.300-8.100z" fill="none" stroke="#8a8a8a" stroke-width="1.700"/></svg>
<div class="t bb" style="left:1623px;top:887px">Event Log</div>
<!-- status bar -->
<svg class="a" style="left:8px;top:918.500px" width="18" height="18" viewBox="0 0 18 18" fill="none" stroke="#8a8a8a" stroke-width="1.400"><rect x="4" y="0.700" width="13" height="12.500"/><path d="M0.800 4.500v12.500h13"/></svg>
<svg class="a" style="left:1081.500px;top:918px" width="18" height="18" viewBox="0 0 18 18" fill="none"><path d="M9 1l7 4v8l-7 4-7-4V5z" stroke="#b9a4f5" stroke-width="1.500"/><path d="M6 5.200l7 3.800-7 3.800z" stroke="#a8b4f6" stroke-width="1.400"/></svg>
<div class="t" style="left:1104.500px;top:914.800px;font-size:18.500px;letter-spacing:1.300px;color:#777">tabnine</div>
<div class="t sb" style="left:1196.500px;top:915px">5:12 (5 chars)</div>
<div class="t sb" style="left:1330.500px;top:915px;letter-spacing:-1.700px">CRLF</div>
<div class="t sb" style="left:1392px;top:915px;color:#a0a0a0;letter-spacing:-.500px">UTF-8</div>
<div class="t sb" style="left:1462px;top:915px;letter-spacing:-.3px">4 spaces</div>
<div class="t sb" style="left:1553.500px;top:915px;letter-spacing:.3px">Python 3.10</div>
<svg class="a" style="left:1671.500px;top:918.500px" width="18" height="18" viewBox="0 0 18 18"><path d="M2 9V5.200a3.300 3.300 0 0 1 6.600 0V6" fill="none" stroke="#6e6e6e" stroke-width="1.800"/><rect x="6" y="8.500" width="11" height="8.500" fill="#6e6e6e"/></svg>
<svg class="a" style="left:1705px;top:917px" width="25" height="22" viewBox="0 0 25 22"><path d="M5.500 15.500a4.500 4.500 0 0 1-0.500-9 6.300 6.300 0 0 1 12-1.300 5 5 0 0 1 3.500 6.300H13v4z" fill="#6e6e6e"/><circle cx="18.500" cy="16" r="3.300" fill="none" stroke="#6e6e6e" stroke-width="2.200"/><path d="M18.500 10.800v2M18.500 19.200v2M13.300 16h2M21.700 16h2M14.800 12.300l1.400 1.400M20.800 18.300l1.400 1.400M14.800 19.700l1.400-1.400M20.800 13.700l1.400-1.400" stroke="#6e6e6e" stroke-width="1.600"/></svg>



</div>
<!-- ===== PotPlayer controls ===== -->
<div class="a" id="pctrl">
<div class="a" style="left:0;top:19px;width:1914px;height:2px;background:#0c0c0c"></div>
<div class="a" style="left:5px;top:9px;width:385px;height:2px;background:#f4dc0a"></div>
<div class="a" style="left:390px;top:9px;width:1417px;height:2px;background:#3c3c3c"></div>
<div class="a" style="left:385.500px;top:5px;width:9px;height:9px;border-radius:50%;background:#f2f2f2"></div>
<svg class="a" style="left:1816px;top:4px" width="14" height="12" viewBox="0 0 14 12"><path d="M0.500 4h2.500l3.500-3.200v10.400L3 8H0.500z" fill="#8a8a8a"/><path d="M8.500 3v6M10.500 1.800v8.400M12.500 3.500v5" stroke="#8a8a8a" stroke-width="1" fill="none"/></svg>
<div class="a" style="left:1834.500px;top:9px;width:61px;height:2px;background:#f4dc0a"></div>
<div class="a" style="left:1895px;top:9px;width:9px;height:2px;background:#0c0c0c"></div>
<div class="a" style="left:1890.500px;top:5px;width:9px;height:9px;border-radius:50%;background:#f2f2f2"></div>
<div class="a" style="left:40px;top:21px;width:1.2px;height:40px;background:#0c0c0c"></div>
<div class="a" style="left:81px;top:21px;width:1.2px;height:40px;background:#0c0c0c"></div>
<div class="a" style="left:122px;top:21px;width:1.2px;height:40px;background:#0c0c0c"></div>
<div class="a" style="left:163px;top:21px;width:1.2px;height:40px;background:#0c0c0c"></div>
<div class="a" style="left:204px;top:21px;width:1.2px;height:40px;background:#0c0c0c"></div>
<div class="a" style="left:1873px;top:21px;width:1.2px;height:40px;background:#0c0c0c"></div>
<svg class="a" style="left:0;top:21px" width="210" height="40" viewBox="0 0 210 40" fill="#f0f0f0">
<rect x="15.800" y="15" width="3.600" height="10"/><rect x="21" y="15" width="3.600" height="10"/>
<rect x="57" y="16" width="8.200" height="8.200"/>
<rect x="97.600" y="16" width="2.200" height="8.500"/><path d="M106.500 16v8.500l-6.500-4.250z"/>
<rect x="145" y="16" width="2.200" height="8.500"/><path d="M138.500 16v8.500l6.500-4.250z"/>
<path d="M184 15.500l4.200 5h-8.400z"/><rect x="179.800" y="22.500" width="8.400" height="1.800"/>
</svg>
<div class="t" style="left:214.500px;top:31.300px;font-size:11.400px;color:#f0f0f0;line-height:20px;height:20px">00:03:04 <span style="color:#7d7d7d">&nbsp;/ 00:14:30</span></div>
<div class="bd" style="left:322.400px;width:28.500px">S/W</div>
<div class="bd" style="left:357px;width:35px">AVC1</div>
<div class="bd" style="left:398px;width:30px">AAC</div>
<div class="bd" style="left:434.300px;width:24.500px">2.0</div>
<svg class="a" style="left:1715px;top:21px" width="195" height="40" viewBox="0 0 195 40">
<text x="3" y="21.300" font-family="Liberation Sans,sans-serif" font-size="10" font-weight="700" fill="#6a6a6a">360</text><circle cx="22" cy="13.500" r="1" fill="none" stroke="#6a6a6a" stroke-width=".7"/>
<path d="M2.500 23c3 2 6 3 9 3M15 25.500c2.500-0.500 4.500-1.500 6.500-2.800M9 23.500l3 2.600-3 2.300" fill="none" stroke="#6a6a6a" stroke-width="1.200"/>
<text x="35.500" y="23" font-family="Liberation Sans,sans-serif" font-size="11" font-weight="700" fill="#6a6a6a">3D</text><path d="M36 26h13" stroke="#6a6a6a" stroke-width="1.200"/>
<path d="M65.500 14.500h11M65.500 18.500h7M65.500 22.500h5" stroke="#f4dc0a" stroke-width="1.600"/><circle cx="77" cy="21.500" r="3.600" fill="none" stroke="#f4dc0a" stroke-width="1.700"/><path d="M79.500 24.300l3.300 3.300" stroke="#f4dc0a" stroke-width="2"/>
<rect x="98.500" y="14" width="13" height="13" rx="1.500" fill="#8a8a8a"/><path d="M101 17.500h8M101 20.500h8M101 23.500h8" stroke="#1e1e1e" stroke-width="1.200"/>
<g transform="translate(128.500,12.500) scale(0.780)" fill="#8a8a8a"><path fill-rule="evenodd" d="M8.300 1h3.400l0.400 2.600 1.500 0.700 2.200-1.600 2.400 2.400-1.600 2.200 0.700 1.500 2.600 0.400v3.400l-2.600 0.400-0.700 1.500 1.600 2.200-2.400 2.400-2.200-1.600-1.500 0.700-0.400 2.600H8.300l-0.400-2.600-1.500-0.700-2.200 1.600-2.400-2.400 1.600-2.200-0.700-1.500L0.100 12.600V9.200l2.600-0.400 0.700-1.500L1.800 5.100l2.400-2.400 2.200 1.600 1.500-0.700zM10 7.300a3.600 3.600 0 1 0 0 7.200a3.600 3.600 0 0 0 0-7.200z"/></g>
<path d="M173 16h12.500M173 20.500h12.500M173 25h12.500" stroke="#f0f0f0" stroke-width="1.300"/>
</svg>
</div>
</body>
</html>
